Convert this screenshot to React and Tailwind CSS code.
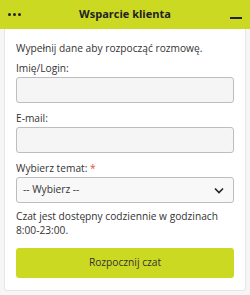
import React from "react";

const App = () => {
  return (
    <div className="w-[250px] h-[295px] bg-[#f6f6f6] font-['Open_Sans',sans-serif] text-[#333]">
      {/* Header */}
      <div className="h-[29px] bg-[#cbd922] flex items-center justify-between px-[8px]">
        <div className="flex gap-[2px] w-[16px]">
          <span className="w-[3px] h-[3px] rounded-full bg-[#222]" />
          <span className="w-[3px] h-[3px] rounded-full bg-[#222]" />
          <span className="w-[3px] h-[3px] rounded-full bg-[#222]" />
        </div>
        <span className="text-[11px] font-bold text-[#222]">Wsparcie klienta</span>
        <div className="w-[16px] flex justify-end pt-[6px]">
          <span className="w-[12px] h-[2px] bg-[#222]" />
        </div>
      </div>

      {/* Card */}
      <div className="mx-[4px] h-[262px] bg-white border border-t-0 border-[#e6e6e6] rounded-b-[3px] px-[11px] pt-[12px] text-[10.2px]">
        <p className="leading-[14px]">Wypełnij dane aby rozpocząć rozmowę.</p>

        <label className="block mt-[6px] leading-[14px]">Imię/Login:</label>
        <input className="block mt-[2px] w-full h-[26px] bg-[#f5f5f5] border border-[#bdbdbd] rounded-[3px] outline-none" />

        <label className="block mt-[8px] leading-[14px]">E-mail:</label>
        <input className="block mt-[2px] w-full h-[26px] bg-[#f5f5f5] border border-[#bdbdbd] rounded-[3px] outline-none" />

        <label className="block mt-[8px] leading-[14px]">
          Wybierz temat: <span className="text-[#e0513a]">*</span>
        </label>
        <div className="mt-[2px] w-full h-[26px] bg-[#f8f8f8] border border-[#bdbdbd] rounded-[3px] flex items-center justify-between pl-[6px] pr-[9px]">
          <span>-- Wybierz --</span>
          <svg width="10" height="7" viewBox="0 0 10 7" fill="none">
            <path d="M1 1.5l4 4 4-4" stroke="#222" strokeWidth="1.6" />
          </svg>
        </div>

        <p className="mt-[6px] leading-[14px]">
          Czat jest dostępny codziennie w godzinach 8:00-23:00.
        </p>

        <button className="mt-[11px] w-full h-[30px] bg-[#cbd922] rounded-[3px] text-[10.2px] text-[#333]">
          Rozpocznij czat
        </button>
      </div>
    </div>
  );
};

export default App;
